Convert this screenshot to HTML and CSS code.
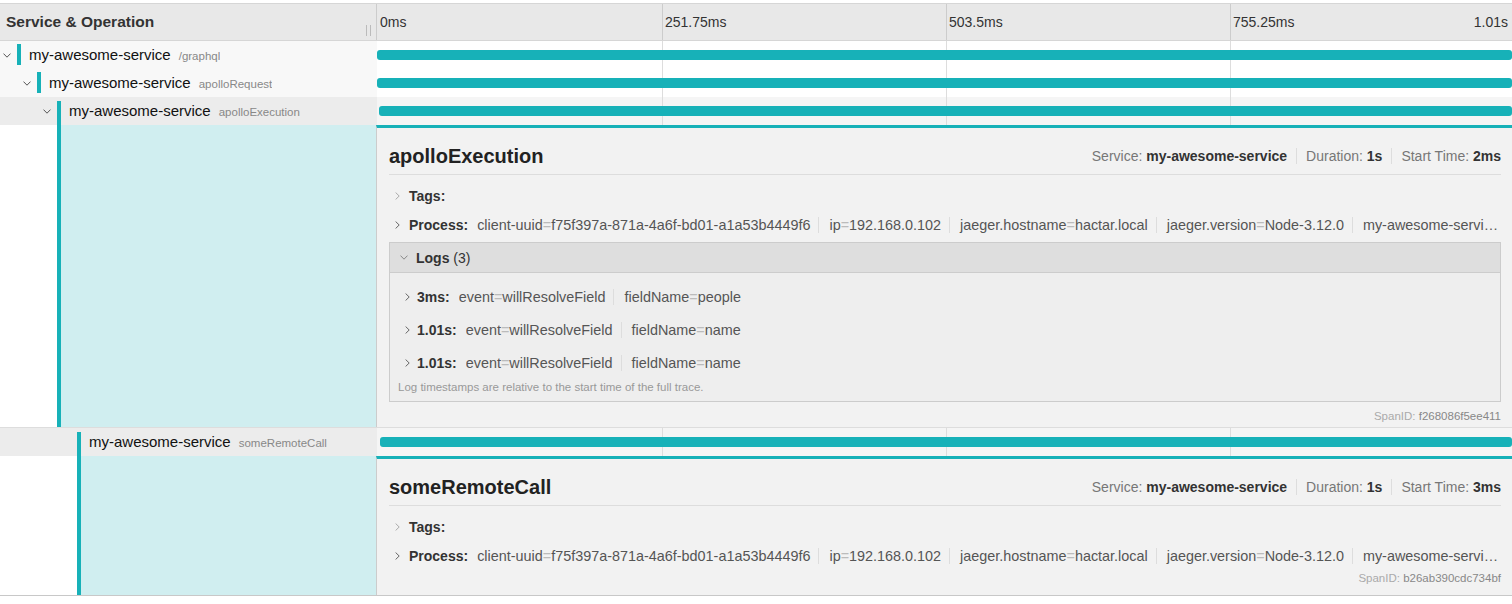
FILE: index.html
```html
<!DOCTYPE html>
<html lang="en">
<head>
<meta charset="utf-8">
<title>Trace</title>
<link rel="stylesheet" href="styles.css">
</head>
<body>
<div class="viewer">
  <div class="vheader">
    <div class="vh-name"><span>Service &amp; Operation</span><span class="resizer"></span></div>
    <div class="vh-ticks">
      <div class="tick">0ms</div>
      <div class="tick">251.75ms</div>
      <div class="tick">503.5ms</div>
      <div class="tick tick-last"><span>755.25ms</span><span>1.01s</span></div>
    </div>
  </div>

  <div class="row">
    <div class="name-cell d0">
      <span class="toggle"><svg class="chev-down" width="8" height="5" viewBox="0 0 8 5"><path d="M.5.6 4 4.2 7.5.6" fill="none" stroke="#555" stroke-width="1"/></svg></span>
      <span class="span-name"><span class="svc">my-awesome-service</span><span class="op">/graphql</span></span>
    </div>
    <div class="bar-cell"><div class="bar" style="margin-left:0%"></div></div>
  </div>

  <div class="row">
    <div class="name-cell d1">
      <span class="toggle"><svg class="chev-down" width="8" height="5" viewBox="0 0 8 5"><path d="M.5.6 4 4.2 7.5.6" fill="none" stroke="#555" stroke-width="1"/></svg></span>
      <span class="span-name"><span class="svc">my-awesome-service</span><span class="op">apolloRequest</span></span>
    </div>
    <div class="bar-cell"><div class="bar" style="margin-left:0%"></div></div>
  </div>

  <div class="row expanded">
    <div class="name-cell d2">
      <span class="toggle"><svg class="chev-down" width="8" height="5" viewBox="0 0 8 5"><path d="M.5.6 4 4.2 7.5.6" fill="none" stroke="#555" stroke-width="1"/></svg></span>
      <span class="span-name"><span class="svc">my-awesome-service</span><span class="op">apolloExecution</span></span>
    </div>
    <div class="bar-cell"><div class="bar" style="margin-left:0.2%"></div></div>
  </div>

  <div class="detail-row">
    <div class="detail-left dl2"><span class="accent"></span></div>
    <div class="detail-info">
      <div class="di-header">
        <h2 class="di-title">apolloExecution</h2>
        <div class="di-meta">
          <span class="meta-item">Service: <b>my-awesome-service</b></span><span class="meta-item">Duration: <b>1s</b></span><span class="meta-item">Start Time: <b>2ms</b></span>
        </div>
      </div>
      <div class="kv-section">
        <div class="kv-row">
          <span class="kv-toggle"><svg width="5" height="8" viewBox="0 0 5 8"><path d="M.6.5 4.2 4 .6 7.5" fill="none" stroke="#aaa" stroke-width="1"/></svg></span>
          <b class="kv-label">Tags:</b>
        </div>
        <div class="kv-row">
          <span class="kv-toggle"><svg width="5" height="8" viewBox="0 0 5 8"><path d="M.6.5 4.2 4 .6 7.5" fill="none" stroke="#666" stroke-width="1"/></svg></span>
          <b class="kv-label">Process:</b>
          <span class="kv-summary"><span class="kv-item">client-uuid<span class="eq">=</span>f75f397a-871a-4a6f-bd01-a1a53b4449f6</span><span class="kv-item">ip<span class="eq">=</span>192.168.0.102</span><span class="kv-item">jaeger.hostname<span class="eq">=</span>hactar.local</span><span class="kv-item">jaeger.version<span class="eq">=</span>Node-3.12.0</span><span class="kv-item">my-awesome-servi…</span></span>
        </div>
      </div>
      <div class="logs">
        <div class="logs-head">
          <svg class="logs-chev" width="8" height="5" viewBox="0 0 8 5"><path d="M.5.6 4 4.2 7.5.6" fill="none" stroke="#888" stroke-width="1"/></svg>
          <b>Logs</b>&nbsp;(3)
        </div>
        <div class="logs-body">
          <div class="log-row">
            <svg class="log-chev" width="5" height="8" viewBox="0 0 5 8"><path d="M.6.5 4.2 4 .6 7.5" fill="none" stroke="#666" stroke-width="1"/></svg>
            <b class="log-label">3ms:</b>
            <span class="kv-summary"><span class="kv-item">event<span class="eq">=</span>willResolveField</span><span class="kv-item">fieldName<span class="eq">=</span>people</span></span>
          </div>
          <div class="log-row">
            <svg class="log-chev" width="5" height="8" viewBox="0 0 5 8"><path d="M.6.5 4.2 4 .6 7.5" fill="none" stroke="#666" stroke-width="1"/></svg>
            <b class="log-label">1.01s:</b>
            <span class="kv-summary"><span class="kv-item">event<span class="eq">=</span>willResolveField</span><span class="kv-item">fieldName<span class="eq">=</span>name</span></span>
          </div>
          <div class="log-row">
            <svg class="log-chev" width="5" height="8" viewBox="0 0 5 8"><path d="M.6.5 4.2 4 .6 7.5" fill="none" stroke="#666" stroke-width="1"/></svg>
            <b class="log-label">1.01s:</b>
            <span class="kv-summary"><span class="kv-item">event<span class="eq">=</span>willResolveField</span><span class="kv-item">fieldName<span class="eq">=</span>name</span></span>
          </div>
          <small class="logs-foot">Log timestamps are relative to the start time of the full trace.</small>
        </div>
      </div>
      <div class="span-id">SpanID: <span>f268086f5ee411</span></div>
    </div>
  </div>

  <div class="row expanded">
    <div class="name-cell d3">
      <span class="toggle"></span>
      <span class="span-name"><span class="svc">my-awesome-service</span><span class="op">someRemoteCall</span></span>
    </div>
    <div class="bar-cell"><div class="bar" style="margin-left:0.3%"></div></div>
  </div>

  <div class="detail-row last">
    <div class="detail-left dl3"><span class="accent"></span></div>
    <div class="detail-info no-logs">
      <div class="di-header">
        <h2 class="di-title">someRemoteCall</h2>
        <div class="di-meta">
          <span class="meta-item">Service: <b>my-awesome-service</b></span><span class="meta-item">Duration: <b>1s</b></span><span class="meta-item">Start Time: <b>3ms</b></span>
        </div>
      </div>
      <div class="kv-section">
        <div class="kv-row">
          <span class="kv-toggle"><svg width="5" height="8" viewBox="0 0 5 8"><path d="M.6.5 4.2 4 .6 7.5" fill="none" stroke="#aaa" stroke-width="1"/></svg></span>
          <b class="kv-label">Tags:</b>
        </div>
        <div class="kv-row">
          <span class="kv-toggle"><svg width="5" height="8" viewBox="0 0 5 8"><path d="M.6.5 4.2 4 .6 7.5" fill="none" stroke="#666" stroke-width="1"/></svg></span>
          <b class="kv-label">Process:</b>
          <span class="kv-summary"><span class="kv-item">client-uuid<span class="eq">=</span>f75f397a-871a-4a6f-bd01-a1a53b4449f6</span><span class="kv-item">ip<span class="eq">=</span>192.168.0.102</span><span class="kv-item">jaeger.hostname<span class="eq">=</span>hactar.local</span><span class="kv-item">jaeger.version<span class="eq">=</span>Node-3.12.0</span><span class="kv-item">my-awesome-servi…</span></span>
        </div>
      </div>
      <div class="span-id">SpanID: <span>b26ab390cdc734bf</span></div>
    </div>
  </div>
</div>
</body>
</html>
```

FILE: styles.css
```css
* { box-sizing: border-box; }
html, body { margin: 0; padding: 0; background: #fff; }
body {
  font-family: "Liberation Sans", Arial, Helvetica, sans-serif;
  font-size: 14px;
  color: #333;
}

.viewer { padding-top: 3px; }

/* header */
.vheader {
  display: flex;
  height: 38px;
  background: #e8e8e8;
  border-top: 1px solid #d6d6d6;
  border-bottom: 1px solid #d6d6d6;
}
.vh-name {
  width: 377px;
  flex: none;
  display: flex;
  justify-content: space-between;
  align-items: center;
  padding-left: 6px;
  border-right: 1px solid #ccc;
  font-size: 15.5px;
  font-weight: bold;
  color: #333;
}
.resizer {
  align-self: flex-end;
  width: 5px;
  height: 11px;
  margin: 0 5px 4px 0;
  border-left: 1px solid #bbb;
  border-right: 1px solid #bbb;
}
.vh-ticks {
  flex: 1;
  display: grid;
  grid-template-columns: 285px 284px 284px 1fr;
}
.tick {
  padding-left: 3px;
  line-height: 36px;
  color: #333;
  white-space: nowrap;
}
.tick + .tick { border-left: 1px solid #ccc; padding-left: 2px; }
.tick-last { display: flex; justify-content: space-between; padding-right: 4px; }

/* rows */
.row { display: flex; height: 28px; }
.row.expanded { height: 29px; border-top: 1px solid #ddd; }
.row + .row.expanded { margin-top: -1px; }

.name-cell {
  width: 377px;
  flex: none;
  display: flex;
  background: #f8f8f8;
}
.expanded .name-cell { background: #ececec; }
.d0 { padding-left: 0; }
.d1 { padding-left: 20px; }
.d2 { padding-left: 40px; }
.d3 { padding-left: 60px; }

.toggle {
  width: 17px;
  flex: none;
  display: flex;
  align-items: center;
  padding-left: 3px;
}
.span-name {
  border-left: 4px solid #17b1b8;
  margin: 3px 0 4px;
  padding-left: 8px;
  font-size: 15px;
  line-height: 21px;
  white-space: nowrap;
  overflow: hidden;
}
.expanded .span-name { margin: 4px 0 0; line-height: 19px; }
.svc { color: #111; }
.op { font-size: 11.5px; color: #888; margin-left: 8px; }

.bar-cell {
  flex: 1;
  display: flex;
  align-items: center;
  background-color: #fff;
  background-image: linear-gradient(#ddd, #ddd), linear-gradient(#ddd, #ddd), linear-gradient(#ddd, #ddd);
  background-size: 1px 100%;
  background-repeat: no-repeat;
  background-position: 285px 0, 569px 0, 853px 0;
}
.expanded .bar-cell { background-color: #f5f5f5; }
.bar {
  flex: 1;
  height: 10px;
  background: #17b1b8;
  border-radius: 3px;
}

/* detail rows */
.detail-row { display: flex; }
.detail-row.last { border-bottom: 1px solid #c8c8c8; }
.detail-left {
  width: 376px;
  flex: none;
  display: flex;
  background: #fff;
}
.dl2 { padding-left: 57px; }
.dl3 { padding-left: 77px; }
.accent {
  flex: 1;
  border-left: 4px solid #17b1b8;
  background: #d0eef0;
}
.detail-info {
  flex: 1;
  min-width: 0;
  background: #f2f2f2;
  border-left: 1px solid #ccc;
  border-top: 3px solid #17b1b8;
  padding: 0 11px 3px 12px;
}
.detail-info.no-logs { padding-bottom: 9px; }

.di-header {
  display: flex;
  justify-content: space-between;
  align-items: flex-end;
  padding: 14px 0 4px;
  border-bottom: 1px solid #ddd;
}
.di-title {
  margin: 0;
  font-size: 20px;
  line-height: 28px;
  font-weight: bold;
  color: #222;
}
.di-meta {
  line-height: 20px;
  margin-bottom: 4px;
  color: #777;
  white-space: nowrap;
}
.di-meta b { color: #333; }
.meta-item + .meta-item {
  border-left: 1px solid #ddd;
  margin-left: 9px;
  padding-left: 9px;
}

.kv-section { padding-top: 6px; }
.kv-row { display: flex; align-items: center; height: 29px; }
.kv-toggle {
  width: 20px;
  flex: none;
  display: flex;
  align-items: center;
  padding-left: 6px;
}
.kv-label { color: #333; margin-right: 9px; }
.kv-summary {
  flex: 1;
  min-width: 0;
  overflow: hidden;
  white-space: nowrap;
  text-overflow: ellipsis;
  font-size: 14.4px;
  color: #555;
}
.kv-item {
  padding-right: 8px;
  margin-right: 10px;
  border-right: 1px solid #ddd;
}
.kv-item:last-child { padding-right: 0; margin-right: 0; border-right: 0; }
.eq { color: #bbb; }

/* logs */
.logs {
  margin: 3px 0 6px;
  border: 1px solid #ccc;
}
.logs-head {
  display: flex;
  align-items: center;
  height: 30px;
  padding-left: 10px;
  background: #dedede;
  border-bottom: 1px solid #ccc;
  color: #333;
}
.logs-chev { margin-right: 8px; }
.logs-body {
  background: #eee;
  padding: 7px 8px 6px;
}
.log-row {
  display: flex;
  align-items: center;
  height: 33px;
  padding-left: 7px;
}
.log-chev { flex: none; margin-right: 7px; }
.log-label { color: #333; margin-right: 9px; }
.logs-foot {
  display: block;
  font-size: 11.5px;
  line-height: 16px;
  color: #999;
}

.span-id {
  text-align: right;
  font-size: 11.5px;
  line-height: 16px;
  color: #aaa;
}
.span-id span { color: #888; }
```
